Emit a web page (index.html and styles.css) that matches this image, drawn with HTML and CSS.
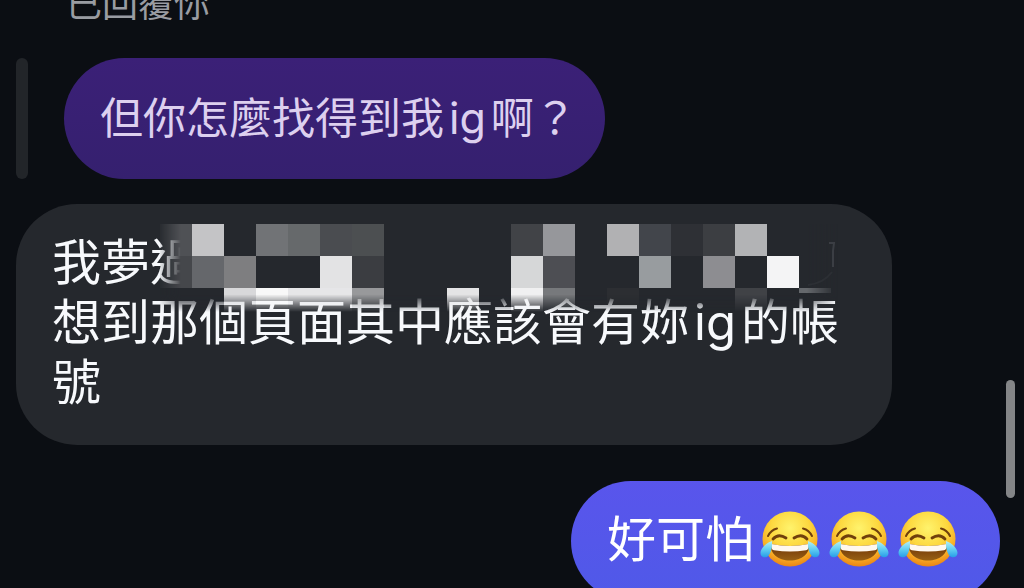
FILE: index.html
```html
<!DOCTYPE html>
<html lang="zh-Hant">
<head>
    <meta charset="UTF-8">
    <meta name="viewport" content="width=device-width, initial-scale=1.0">
    <title>訊息</title>
    <link rel="stylesheet" href="styles.css">
</head>
<body>
    <main class="chat">
        <p class="reply-label">已回覆你</p>

        <div class="quote">
            <span class="quote-bar"></span>
            <p class="bubble quoted">但你怎麼找得到我<span class="latin">ig</span>啊？</p>
        </div>

        <div class="bubble received">
            <p>我夢過<br>想到那個頁面其中應該會有妳<span class="latin">ig</span>的帳號</p>

            <!-- mosaic over the first line, 32px cells -->
            <svg class="mosaic" width="688" height="88" viewBox="0 0 688 88" aria-hidden="true">
                <defs>
                    <linearGradient id="side" x1="0" x2="1" y1="0" y2="0">
                        <stop offset="0" stop-color="#fff" stop-opacity="0.1"/>
                        <stop offset="0.03" stop-color="#fff"/>
                        <stop offset="0.94" stop-color="#fff"/>
                        <stop offset="0.985" stop-color="#fff" stop-opacity="0"/>
                    </linearGradient>
                    <linearGradient id="bottom" x1="0" x2="0" y1="0" y2="1">
                        <stop offset="0.8" stop-color="#000" stop-opacity="0"/>
                        <stop offset="1" stop-color="#000"/>
                    </linearGradient>
                    <mask id="fade" maskUnits="userSpaceOnUse" x="0" y="0" width="688" height="88">
                        <rect width="688" height="88" fill="url(#side)"/>
                        <rect width="688" height="88" fill="url(#bottom)"/>
                    </mask>
                </defs>
                <g mask="url(#fade)" shape-rendering="crispEdges">
                    <rect width="688" height="88" fill="#25282d"/>
                    <path fill="#4f5155" d="M0 0h32v32H0z"/>
                    <path fill="#c4c4c6" d="M32 0h32v32H32z"/>
                    <path fill="#717376" d="M96 0h32v32H96z"/>
                    <path fill="#66696b" d="M128 0h32v32h-32z"/>
                    <path fill="#4a4c50" d="M160 0h32v32h-32z"/>
                    <path fill="#4c4f51" d="M192 0h32v32h-32z"/>
                    <path fill="#414347" d="M351 0h32v32h-32z"/>
                    <path fill="#96979b" d="M383 0h32v32h-32z"/>
                    <path fill="#b1b1b3" d="M447 0h32v32h-32z"/>
                    <path fill="#42454b" d="M479 0h32v32h-32z"/>
                    <path fill="#2e3035" d="M511 0h32v32h-32z"/>
                    <path fill="#3c3e42" d="M543 0h32v32h-32z"/>
                    <path fill="#b2b3b5" d="M575 0h32v32h-32z"/>

                    <path fill="#45474b" d="M0 32h32v32H0z"/>
                    <path fill="#65676b" d="M32 32h32v32H32z"/>
                    <path fill="#7e7e80" d="M64 32h32v32H64z"/>
                    <path fill="#e3e3e4" d="M160 32h32v32h-32z"/>
                    <path fill="#3b3d41" d="M192 32h32v32h-32z"/>
                    <path fill="#d6d7d8" d="M351 32h32v32h-32z"/>
                    <path fill="#4d4e53" d="M383 32h32v32h-32z"/>
                    <path fill="#989c9f" d="M479 32h32v32h-32z"/>
                    <path fill="#8d8d91" d="M543 32h32v32h-32z"/>
                    <path fill="#f4f4f5" d="M607 32h32v32h-32z"/>

                    <path fill="#d8d8da" d="M64 64h32v24H64z"/>
                    <path fill="#f8f8f8" d="M96 64h32v24H96z"/>
                    <path fill="#e6e6e8" d="M128 64h64v24h-64z"/>
                    <path fill="#98999b" d="M192 64h32v24h-32z"/>
                    <path fill="#e4e4e5" d="M287 64h32v24h-32z"/>
                    <path fill="#f0f0f1" d="M351 64h32v24h-32z"/>
                    <path fill="#77797c" d="M383 64h32v24h-32z"/>
                    <path fill="#2c2e32" d="M447 64h32v24h-32z"/>
                    <path fill="#404246" d="M575 64h32v24h-32z"/>
                    <path fill="#65686c" d="M639 64h32v5h-32z"/>
                </g>
                <path d="M669 19h5l-1 8v16" fill="none" stroke="#3b3e44" stroke-width="2"/>
                <path d="M672 48q-8 11-24 13" fill="none" stroke="#2c2f34" stroke-width="2"/>
            </svg>
        </div>

        <div class="bubble sent">
            <p>好可怕</p>
            <div class="emojis">
                <svg class="emoji" viewBox="0 0 60 60" role="img" aria-label="😂">
                    <defs>
                        <radialGradient id="face" cx="0.5" cy="0.3" r="0.7">
                            <stop offset="0" stop-color="#fff36c"/>
                            <stop offset="0.5" stop-color="#fdd83f"/>
                            <stop offset="0.8" stop-color="#f8ac24"/>
                            <stop offset="1" stop-color="#e98516"/>
                        </radialGradient>
                        <linearGradient id="mouth" x1="0" x2="0" y1="0" y2="1">
                            <stop offset="0" stop-color="#6d3206"/>
                            <stop offset="1" stop-color="#986014"/>
                        </linearGradient>
                        <linearGradient id="tear" x1="0" x2="0" y1="0" y2="1">
                            <stop offset="0" stop-color="#b5f0f5"/>
                            <stop offset="0.5" stop-color="#62cef2"/>
                            <stop offset="1" stop-color="#269ce8"/>
                        </linearGradient>
                        <g id="joy">
                            <circle cx="30" cy="29" r="27.5" fill="url(#face)"/>
                            <g fill="none" stroke="#70400c" stroke-linecap="round">
                                <path d="M8 26q3-6 9-7.500M52 26q-3-6-9-7.500" stroke-width="2"/>
                                <path d="M13 29q5.500-6 13-1M47 29q-5.500-6-13-1" stroke-width="2.800"/>
                            </g>
                            <path d="M11 34q19 4 38 0c1.500 9-7 16.500-19 16.500S9.500 43 11 34z" fill="url(#mouth)"/>
                            <path d="M11.500 34q18.500 4 37 0c.8 3.500-.5 6-2.500 6.300q-16 2.500-32 0c-2-.3-3.300-2.800-2.500-6.300z" fill="#fff8ef"/>
                            <path id="drop" d="M12 31C6 33 .5 38.500.5 43c0 3 2.200 4.500 5 4.300C10 47 12.500 39 12 31z" fill="url(#tear)"/>
                            <use href="#drop" transform="matrix(-1 0 0 1 60 0)"/>
                        </g>
                    </defs>
                    <use href="#joy"/>
                </svg>
                <svg class="emoji" viewBox="0 0 60 60" role="img" aria-label="😂"><use href="#joy"/></svg>
                <svg class="emoji" viewBox="0 0 60 60" role="img" aria-label="😂"><use href="#joy"/></svg>
            </div>
        </div>
    </main>
    <div class="scroll-thumb"></div>
</body>
</html>
```

FILE: styles.css
```css
* {
    box-sizing: border-box;
}
body {
    position: relative;
    height: 100vh;
    margin: 0;
    overflow: hidden;
    background-color: #0b0e13;
    color: #f7f9fc;
    font-family: Inter, "Noto Sans CJK TC", sans-serif;
}
p {
    margin: 0;
}
.chat {
    display: flex;
    flex-direction: column;
    align-items: flex-start;
    margin-top: -20px;
    padding: 0 24px 24px 16px;
}
.reply-label {
    margin: 0 0 30px 50px;
    color: #999ca2;
    font-size: 36px;
    line-height: 48px;
}
.quote {
    display: flex;
    gap: 36px;
    margin-bottom: 25px;
}
.quote-bar {
    width: 12px;
    border-radius: 6px;
    background-color: #222529;
}
.bubble {
    border-radius: 61px;
    padding: 30px 36px;
    font-size: 49px;
    line-height: 60px;
}
.quoted {
    padding: 36px 28px 36px 36px;
    background: linear-gradient(#3b2077, #35206f);
    color: #ddd0ef;
    font-size: 43px;
    line-height: 49px;
}
.latin {
    margin: 0 5px;
}
.received {
    position: relative;
    max-width: 89%;
    margin-bottom: 36px;
    padding: 29px 36px 32px;
    background-color: #25282d;
}
.mosaic {
    position: absolute;
    top: 20px;
    left: 144px;
}
.sent {
    display: flex;
    align-items: center;
    align-self: flex-end;
    gap: 6px;
    padding: 29px 42px 31px 36px;
    background: linear-gradient(#5955ec, #4f59e8);
    color: #fff;
}
.emojis {
    display: flex;
    gap: 9px;
}
.emoji {
    width: 60px;
    height: 60px;
}
.scroll-thumb {
    position: absolute;
    right: 9px;
    bottom: 90px;
    width: 9px;
    height: 20%;
    border-radius: 5px;
    background-color: #848587;
}
```
